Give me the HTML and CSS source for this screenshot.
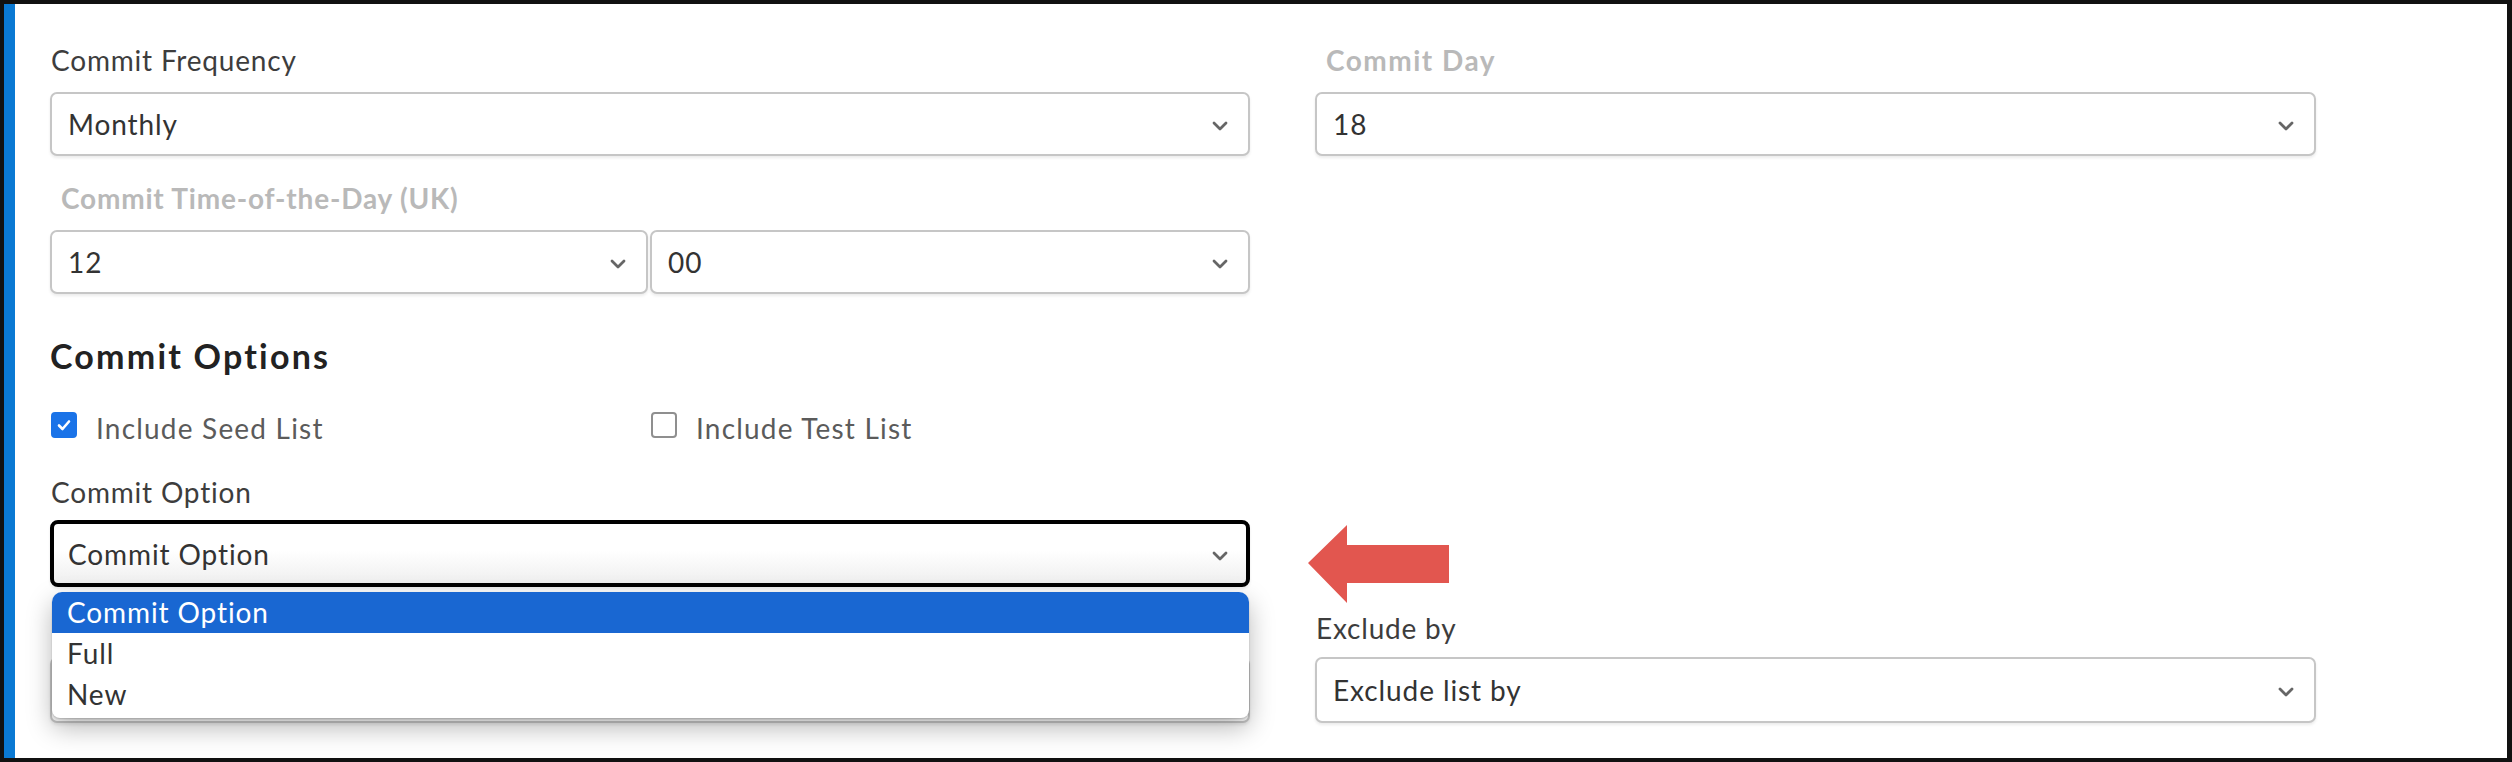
FILE: index.html
```html
<!DOCTYPE html>
<html lang="en">
<head>
<meta charset="utf-8">
<title>Commit settings</title>
<link rel="stylesheet" href="styles.css">
</head>
<body>
<div class="frame">
  <div class="accent"></div>
  <div class="content">

    <div class="row row-1">
      <div class="field">
        <div class="label">Commit Frequency</div>
        <div class="select"><span>Monthly</span><svg class="chev" viewBox="0 0 16 10" width="16" height="10"><path d="M2 2 L8 8 L14 2"/></svg></div>
      </div>
      <div class="field">
        <div class="label label-muted">Commit Day</div>
        <div class="select"><span>18</span><svg class="chev" viewBox="0 0 16 10" width="16" height="10"><path d="M2 2 L8 8 L14 2"/></svg></div>
      </div>
    </div>

    <div class="row row-2">
      <div class="field">
        <div class="label label-muted label-wide">Commit Time-of-the-Day (UK)</div>
        <div class="pair">
          <div class="select"><span>12</span><svg class="chev" viewBox="0 0 16 10" width="16" height="10"><path d="M2 2 L8 8 L14 2"/></svg></div>
          <div class="select"><span>00</span><svg class="chev" viewBox="0 0 16 10" width="16" height="10"><path d="M2 2 L8 8 L14 2"/></svg></div>
        </div>
      </div>
      <div></div>
    </div>

    <h2 class="heading">Commit Options</h2>

    <div class="row row-checks">
      <div class="checks">
        <label class="check"><span class="box box-on"><svg viewBox="0 0 16 16" width="16" height="16"><path d="M3 8.5 L6.5 12 L13 4.5"/></svg></span><span class="check-text">Include Seed List</span></label>
        <label class="check"><span class="box"></span><span class="check-text">Include Test List</span></label>
      </div>
      <div></div>
    </div>

    <div class="row row-3">
      <div class="field field-open">
        <div class="label label-tight">Commit Option</div>
        <div class="select select-focus"><span>Commit Option</span><svg class="chev" viewBox="0 0 16 10" width="16" height="10"><path d="M2 2 L8 8 L14 2"/></svg></div>
        <ul class="menu">
          <li class="opt opt-active">Commit Option</li>
          <li class="opt">Full</li>
          <li class="opt">New</li>
        </ul>
      </div>
      <div class="pointer-cell">
        <svg class="pointer" viewBox="0 0 141 78" width="141" height="78"><polygon points="0,38 39,0 39,20 141,20 141,58 39,58 39,78"/></svg>
      </div>
    </div>

    <div class="row row-4">
      <div class="field">
        <div class="label label-low"></div>
        <div class="select select-tall"></div>
      </div>
      <div class="field">
        <div class="label label-low">Exclude by</div>
        <div class="select select-tall"><span>Exclude list by</span><svg class="chev" viewBox="0 0 16 10" width="16" height="10"><path d="M2 2 L8 8 L14 2"/></svg></div>
      </div>
    </div>

  </div>
</div>
</body>
</html>
```
FILE: styles.css
```css
* { box-sizing: border-box; }

html, body {
  margin: 0;
  padding: 0;
  background: #ffffff;
}

body {
  font-family: "Lato", "Liberation Sans", sans-serif;
  color: #3a3a3a;
}

.frame {
  width: 2512px;
  height: 762px;
  border: 4px solid #111111;
  border-right-width: 5px;
  display: flex;
  overflow: hidden;
  background: #ffffff;
}

.accent {
  width: 11px;
  flex: none;
  background: #0a79d3;
}

.content {
  flex: 1;
  padding: 41px 0 0 35px;
  position: relative;
}

.row {
  display: grid;
  grid-template-columns: 1200px 1001px;
  column-gap: 65px;
  align-items: start;
}

.row-2 { margin-top: 27px; }
.row-checks { margin-top: 36px; }
.row-3 { margin-top: 35px; }
.row-4 { margin-top: 26px; }

.field {
  display: flex;
  flex-direction: column;
}

.label {
  font-size: 28px;
  letter-spacing: 0.8px;
  line-height: 30px;
  height: 30px;
  margin: 0 0 17px 1px;
  color: #3d3d3d;
  white-space: nowrap;
}

.label-muted {
  color: #b9b9b9;
  font-weight: 700;
  padding-left: 10px;
  letter-spacing: 1.5px;
}

.label-wide { letter-spacing: 0.8px; }

.label-tight { margin-bottom: 13px; }
.label-low { margin-bottom: 14px; }

.select {
  height: 64px;
  border: 2px solid #c6c6c6;
  border-radius: 7px;
  background: #ffffff;
  box-shadow: 0 2px 3px rgba(0, 0, 0, 0.08);
  display: flex;
  align-items: center;
  justify-content: space-between;
  padding: 0 20px 0 16px;
  font-size: 28px;
  letter-spacing: 0.9px;
  line-height: 30px;
  color: #333333;
}

.select-tall { height: 66px; }

.select-focus {
  height: 67px;
  border: 4px solid #000000;
  border-radius: 8px;
  padding-left: 14px;
  padding-right: 18px;
  background: linear-gradient(#ffffff 0%, #ffffff 45%, #efefef 100%);
}

.chev {
  flex: none;
  margin-top: 4px;
}

.chev path {
  fill: none;
  stroke: #666666;
  stroke-width: 2.8;
  stroke-linecap: round;
  stroke-linejoin: round;
}

.pair {
  display: grid;
  grid-template-columns: 598px 600px;
  column-gap: 2px;
}

.heading {
  margin: 42px 0 0 0;
  font-size: 34px;
  letter-spacing: 2.2px;
  line-height: 40px;
  font-weight: 700;
  color: #222222;
}

.checks {
  display: grid;
  grid-template-columns: 600px 600px;
}

.check {
  display: flex;
  align-items: flex-start;
  height: 30px;
}

.box {
  width: 26px;
  height: 26px;
  margin-left: 1px;
  border: 2px solid #8f8f8f;
  border-radius: 4px;
  background: #ffffff;
  display: flex;
  align-items: center;
  justify-content: center;
  flex: none;
}

.box-on {
  background: #1a73e8;
  border-color: #1a73e8;
}

.box-on path {
  fill: none;
  stroke: #ffffff;
  stroke-width: 2.6;
  stroke-linecap: round;
  stroke-linejoin: round;
}

.check-text {
  margin-left: 19px;
  margin-top: 1px;
  font-size: 28px;
  letter-spacing: 1.2px;
  line-height: 30px;
  color: #5b5b5b;
  white-space: nowrap;
}

.field-open { position: relative; }

.menu {
  position: absolute;
  left: 2px;
  top: 115px;
  width: 1197px;
  margin: 0;
  padding: 0 0 3px 0;
  list-style: none;
  background: #ffffff;
  border-radius: 10px 10px 8px 8px;
  overflow: hidden;
  box-shadow: 0 10px 26px rgba(0, 0, 0, 0.28), 0 1px 2px rgba(0, 0, 0, 0.2);
  z-index: 5;
}

.opt {
  height: 41px;
  line-height: 41px;
  padding-left: 15px;
  font-size: 28px;
  letter-spacing: 0.9px;
  color: #333333;
}

.opt-active {
  background: #1967d2;
  color: #ffffff;
}

.pointer-cell { position: relative; }

.pointer {
  position: absolute;
  left: -7px;
  top: 48px;
}

.pointer polygon { fill: #e2564f; }
```
